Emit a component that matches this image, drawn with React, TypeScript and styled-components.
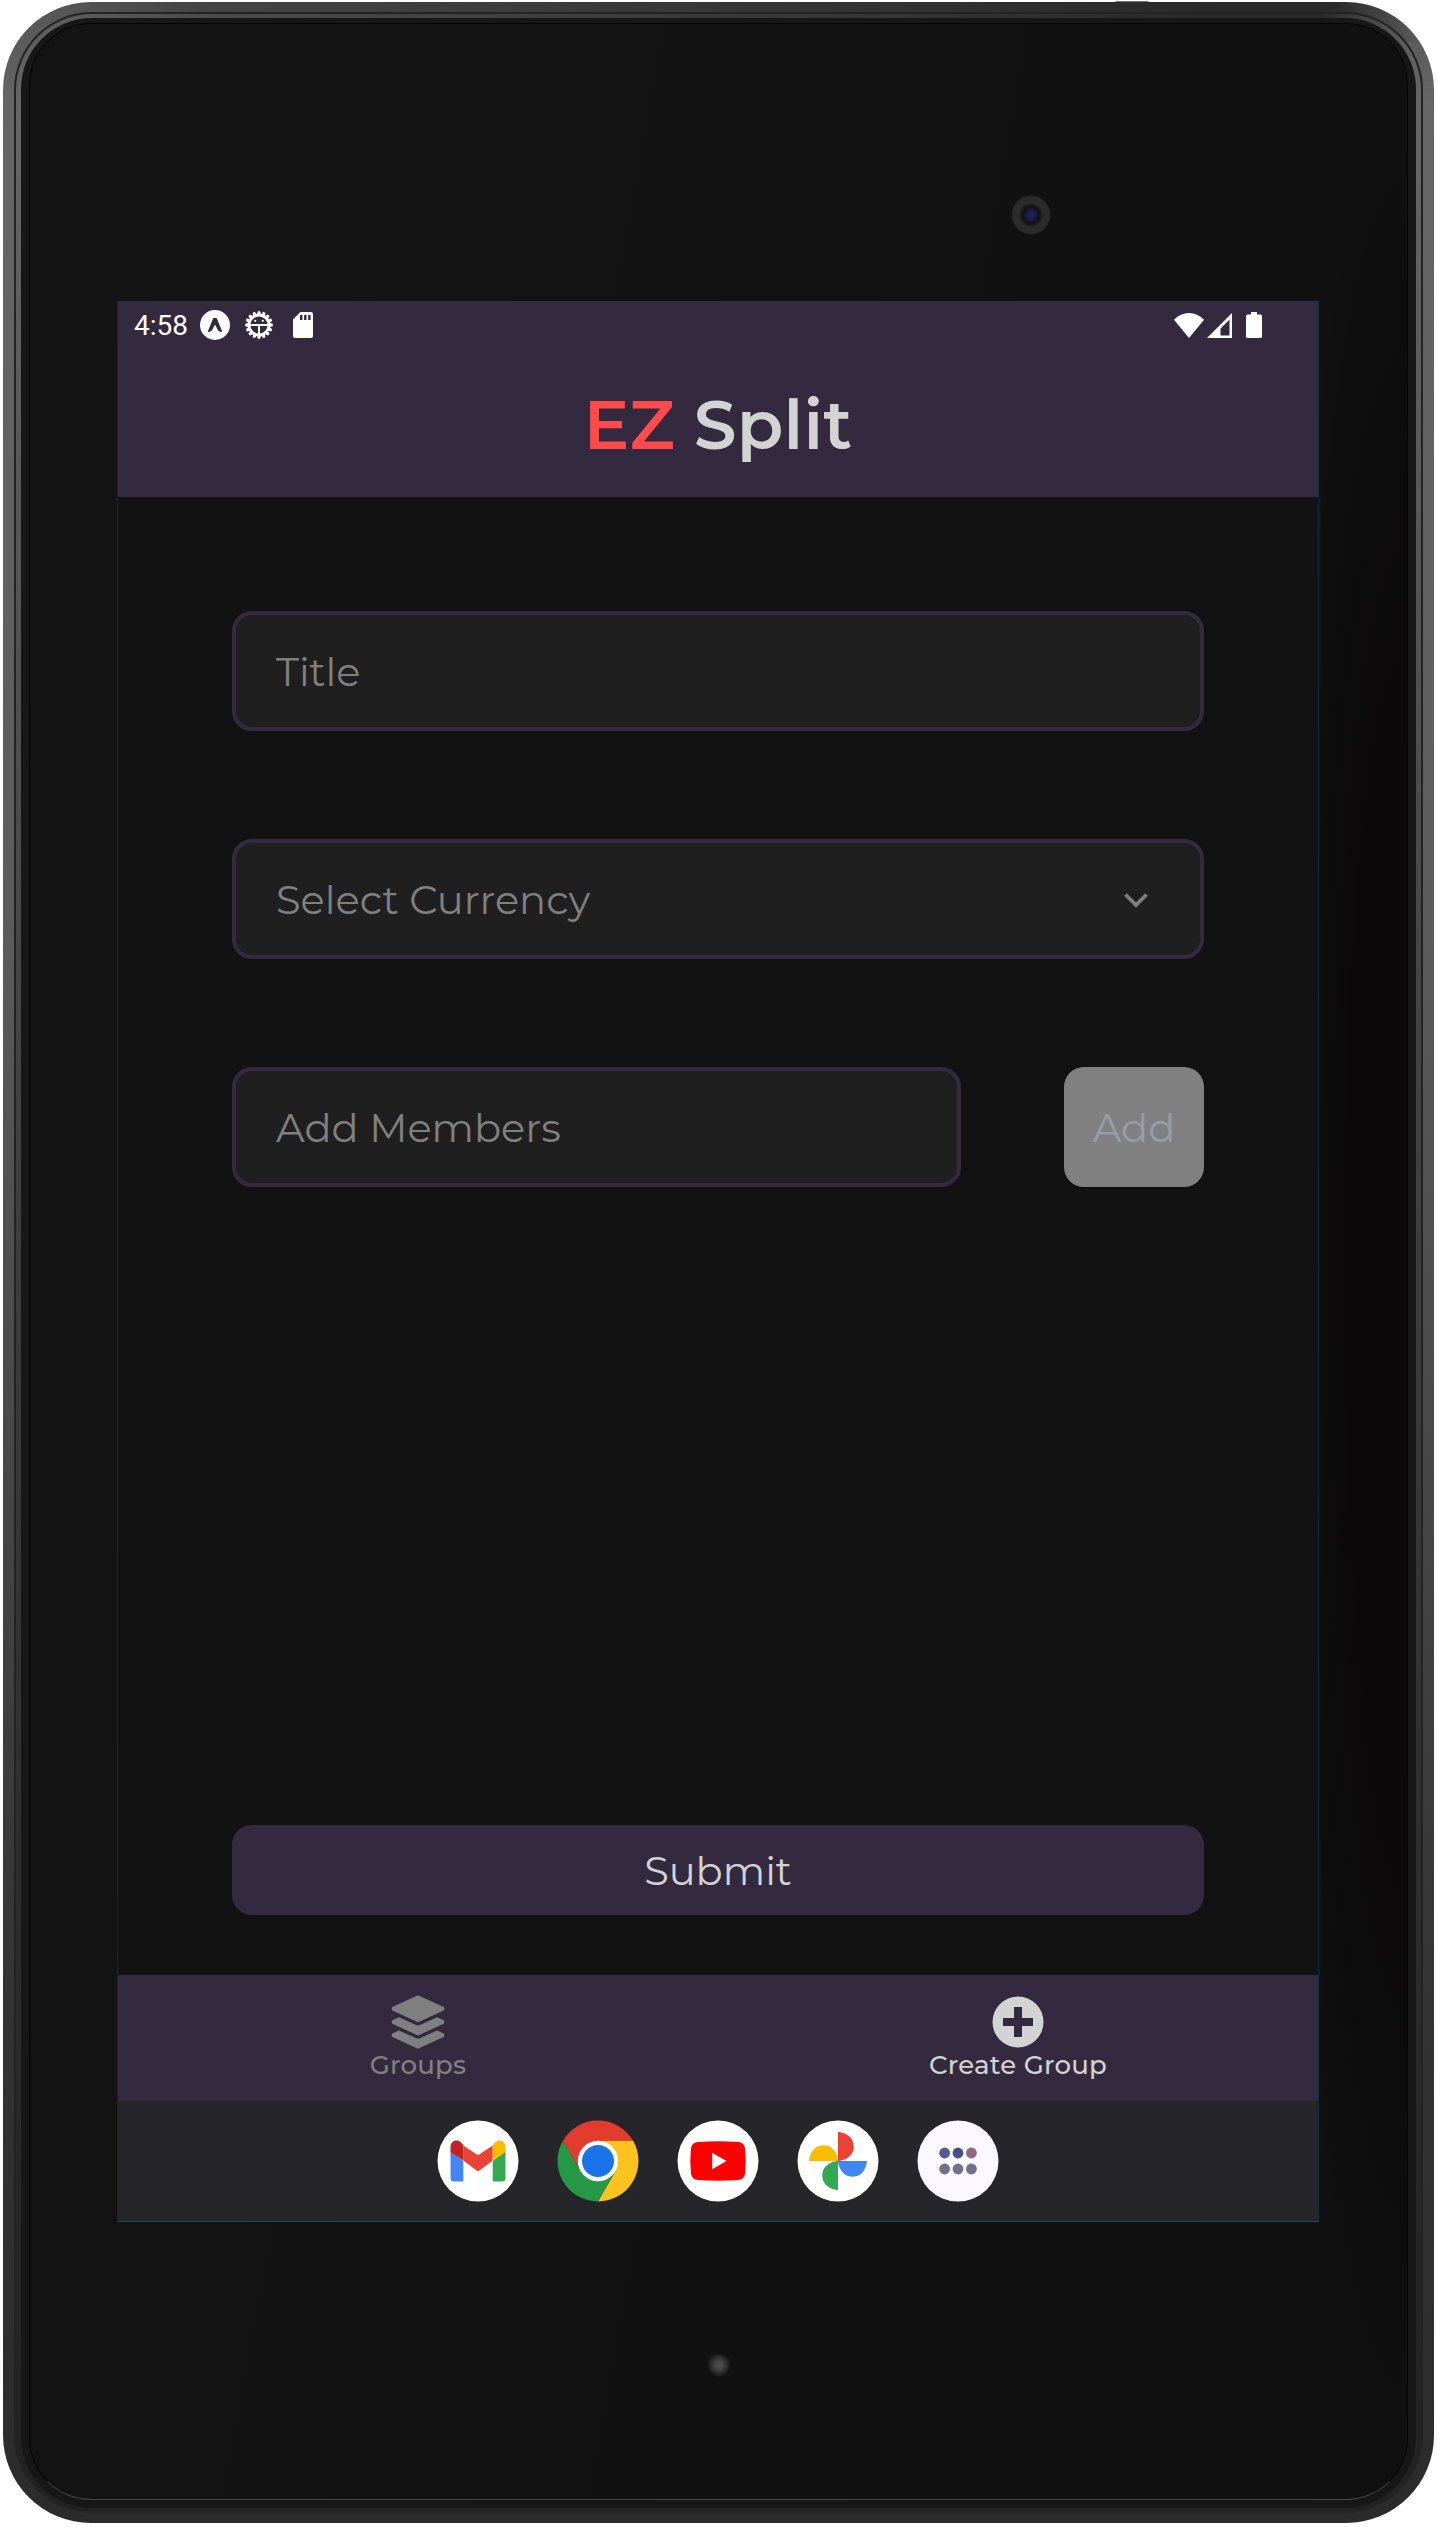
import React from "react";
import styled, { createGlobalStyle } from "styled-components";

const Global = createGlobalStyle`
  * { box-sizing: border-box; }
  body { margin: 0; background: #fff; }
`;

const sans = `Montserrat, Inter, "Open Sans", sans-serif`;

const Page = styled.div`
  position: relative;
  width: 1437px;
  height: 2527px;
  padding: 2px 3px 4px;
  background: #fff;
  overflow: hidden;
`;

const SideKey = styled.div`
  position: absolute;
  left: 1114px;
  top: 1px;
  width: 36px;
  height: 3px;
  border-radius: 3px 3px 0 0;
  background: #777;
`;

const Shell = styled.div`
  position: relative;
  height: 100%;
  padding: 10px 11px 10px;
  border-radius: 88px;
  background:
    linear-gradient(90deg, #44444400 60px, #444 200px, #2a2a2a 85%, #2a2a2a 93%, #2a2a2a00 99%) 0 0 / 100% 40px no-repeat,
    linear-gradient(180deg, #555 0, #666 100px, #5c5c5c 900px, #333 2000px, #2b2b2b 100%);
`;

const Groove = styled.div`
  height: 100%;
  padding: 2px;
  border-radius: 78px;
  background: #232323;
`;

const Rim = styled.div`
  height: 100%;
  padding: 4px 5px 3px;
  border-radius: 76px;
  background:
    linear-gradient(90deg, #55555500 60px, #4a4a4a 200px, #2a2a2a 85%, #2a2a2a 93%, #2a2a2a00 99%) 0 0 / 100% 30px no-repeat,
    linear-gradient(180deg, #5c5c5c 0, #666 100px, #444 1000px, #2a2a2a 2000px, #222 100%);
`;

const Gasket = styled.div`
  height: 100%;
  padding: 5px 8px 8px;
  border-radius: 71px;
  background: #171717;
`;

const Face = styled.div`
  position: relative;
  height: 100%;
  padding: 276px 86px 0 87px;
  border: 1px solid #050505;
  border-bottom-color: #444;
  border-radius: 62px;
  background:
    radial-gradient(ellipse 130px 1200px at 100% 50%, #0a0809 40%, #0a080900 100%),
    linear-gradient(100deg, #141414 0%, #111 60%, #101010 100%);
`;

const Camera = styled.div`
  position: absolute;
  left: 981px;
  top: 171px;
  width: 40px;
  height: 40px;
  border-radius: 50%;
  background: radial-gradient(circle at 50% 50%, #202060 0 2px, #181830 6px, #111 8px, #1a1a1a 10px, #2a2a2a 12px, #2c2c2c 18px, #141414 20px);
`;

const Led = styled.div`
  position: absolute;
  left: 677px;
  top: 2329px;
  width: 24px;
  height: 24px;
  border-radius: 50%;
  background: radial-gradient(circle, #4a4a4a 0 3px, #333 7px, #121212 12px);
`;

const Screen = styled.main`
  display: flex;
  flex-direction: column;
  width: 1202px;
  height: 1922px;
  border: 1px solid #00303f;
  border-top-color: #02191f;
  border-bottom-color: #005468;
  background: #121212;
  font-family: ${sans};
`;

const Header = styled.header`
  height: 196px;
  background: #342a40;
`;

const StatusBar = styled.div`
  display: flex;
  justify-content: space-between;
  height: 48px;
  padding: 0 56px 0 16px;
`;

const StatusGroup = styled.div`
  display: flex;
  align-items: center;
`;

const StatusIcon = styled.svg<{ $gap?: number }>`
  display: block;
  margin-left: ${p => p.$gap ?? 0}px;
`;

const Time = styled.span`
  width: 66px;
  padding-top: 2px;
  color: #fff;
  font: 400 28px/48px Roboto, sans-serif;
`;

const Brand = styled.h1`
  margin: 27px 0 0;
  color: #d3d3d3;
  font-size: 68px;
  font-weight: 600;
  line-height: 98px;
  letter-spacing: 0.2px;
  text-align: center;
`;

const Accent = styled.span`
  color: #ff4b4b;
`;

const Form = styled.form`
  display: flex;
  flex-direction: column;
  flex: 1;
  gap: 108px;
  padding: 114px 114px 60px;
`;

const Field = styled.div<{ $width?: number }>`
  display: flex;
  align-items: center;
  justify-content: space-between;
  width: ${p => (p.$width ? p.$width + "px" : "100%")};
  height: 120px;
  padding: 0 51px 0 40px;
  border: 4px solid #342a40;
  border-radius: 20px;
  background: #1f1f1f;
  color: #808080;
  font-size: 40px;
  font-weight: 400;
`;

const Chevron = styled.svg`
  display: block;
  margin-top: 2px;
`;

const MemberRow = styled.div`
  display: flex;
  justify-content: space-between;
`;

const Button = styled.div<{ $muted?: boolean }>`
  display: flex;
  align-items: center;
  justify-content: center;
  width: ${p => (p.$muted ? "140px" : "100%")};
  height: ${p => (p.$muted ? 120 : 90)}px;
  margin-top: ${p => (p.$muted ? "0" : "auto")};
  border-radius: 20px;
  background: ${p => (p.$muted ? "#808080" : "#342a40")};
  color: ${p => (p.$muted ? "#939ea8" : "#d3d3d3")};
  font-size: 40px;
  font-weight: 400;
`;

const Tabs = styled.nav`
  display: grid;
  grid-template-columns: 1fr 1fr;
  height: 126px;
  background: #342a40;
`;

const Tab = styled.div<{ $active?: boolean }>`
  display: flex;
  flex-direction: column;
  align-items: center;
  padding-top: 20px;
  color: ${p => (p.$active ? "#d3d3d3" : "#808080")};
  font-size: 26px;
  font-weight: 500;
  line-height: 33px;
  letter-spacing: 0.2px;
`;

const Dock = styled.div`
  display: flex;
  justify-content: center;
  align-items: center;
  gap: 38px;
  height: 120px;
  background: #26252a;
`;

const AppIcon = styled.svg`
  display: block;
  width: 82px;
  height: 82px;
`;

const teeth = Array.from({ length: 16 }, (_, i) => i * 22.5);

export default function App() {
  return (
    <>
      <Global />
      <Page>
        <SideKey />
        <Shell><Groove><Rim><Gasket><Face>
          <Camera />
          <Led />
          <Screen>
            <Header>
              <StatusBar>
                <StatusGroup>
                  <Time>4:58</Time>
                  <StatusIcon width="30" height="30" viewBox="0 0 30 30">
                    <circle cx="15" cy="15" r="15" fill="#fff" />
                    <path d="M8.3 21.5 13.6 8.4H16.4L21.7 21.5 18.8 20.8 15 13.6 11.2 20.8Z" fill="#342a40" stroke="#342a40" strokeWidth="1" strokeLinejoin="round" />
                  </StatusIcon>
                  <StatusIcon width="28" height="28" viewBox="-14 -14 28 28" $gap={15}>
                    {teeth.map(a => <path key={a} d="M-2.2-10 -1.2-13.8H1.2L2.2-10Z" fill="#fff" transform={`rotate(${a})`} />)}
                    <circle r="9.9" fill="none" stroke="#fff" strokeWidth="2.6" />
                    <path d="M-9 0H9M0 0V10" stroke="#fff" strokeWidth="2" />
                    <circle cx="-3.8" cy="-4.2" r="1.1" fill="#fff" />
                    <circle cx="3.8" cy="-4.2" r="1.1" fill="#fff" />
                  </StatusIcon>
                  <StatusIcon width="20" height="26" viewBox="0 0 20 26" $gap={20}>
                    <path d="M7.5 0H18Q20 0 20 2V24Q20 26 18 26H2Q0 26 0 24V7.2Z" fill="#fff" />
                    <path d="M8.2 3V8M12.3 3V8M16.4 3V8" stroke="#342a40" strokeWidth="2.4" />
                  </StatusIcon>
                </StatusGroup>
                <StatusGroup>
                  <StatusIcon width="30" height="25" viewBox="0 0 30 25">
                    <path d="M0 6.8Q6.5 0 15 0T30 6.8L15 25Z" fill="#fff" />
                  </StatusIcon>
                  <StatusIcon width="25" height="25" viewBox="0 0 25 25" $gap={3}>
                    <path fillRule="evenodd" d="M25 0V25H0ZM22.5 6.5 13.5 15.5V22.5H22.5Z" fill="#fff" />
                  </StatusIcon>
                  <StatusIcon width="16" height="26" viewBox="0 0 16 26" $gap={14}>
                    <path d="M5 0H11V2.5H14.5Q16 2.5 16 4V24.5Q16 26 14.5 26H1.5Q0 26 0 24.5V4Q0 2.5 1.5 2.5H5Z" fill="#fff" />
                  </StatusIcon>
                </StatusGroup>
              </StatusBar>
              <Brand><Accent>EZ</Accent> Split</Brand>
            </Header>
            <Form>
              <Field>Title</Field>
              <Field>
                Select Currency
                <Chevron width="26" height="17" viewBox="0 0 26 17">
                  <path d="M2.5 2.5 13 13 23.5 2.5" fill="none" stroke="#808080" strokeWidth="3.8" />
                </Chevron>
              </Field>
              <MemberRow>
                <Field $width={729}>Add Members</Field>
                <Button $muted>Add</Button>
              </MemberRow>
              <Button>Submit</Button>
            </Form>
            <Tabs>
              <Tab>
                <svg width="54" height="54" viewBox="-6 -6 524 524">
                  <path fill="#808080" d="M12.41 148.02l232.94 105.67c6.8 3.09 14.49 3.09 21.29 0l232.94-105.67c16.55-7.51 16.55-32.52 0-40.03L266.65 2.31a25.607 25.607 0 0 0-21.29 0L12.41 107.98c-16.55 7.51-16.55 32.53 0 40.04zm487.18 88.28l-58.09-26.33-161.64 73.27c-7.56 3.43-15.59 5.17-23.86 5.17s-16.29-1.74-23.86-5.17L70.51 209.97l-58.1 26.33c-16.55 7.5-16.55 32.5 0 40l232.94 105.59c6.8 3.08 14.49 3.08 21.29 0L499.59 276.3c16.55-7.5 16.55-32.5 0-40zm0 127.8l-57.87-26.23-161.86 73.37c-7.56 3.43-15.59 5.17-23.86 5.17s-16.29-1.74-23.86-5.17L70.29 337.87 12.41 364.1c-16.55 7.5-16.55 32.5 0 40l232.94 105.59c6.8 3.08 14.49 3.08 21.29 0L499.59 404.1c16.55-7.5 16.55-32.5 0-40z" />
                </svg>
                Groups
              </Tab>
              <Tab $active>
                <svg width="54" height="54" viewBox="-27 -27 54 54">
                  <circle r="25.5" fill="#d3d3d3" />
                  <path d="M0-15V15M-15 0H15" stroke="#342a40" strokeWidth="8" />
                </svg>
                Create Group
              </Tab>
            </Tabs>
            <Dock>
              <AppIcon viewBox="-41 -41 82 82">
                <circle r="40.5" fill="#fff" />
                <path d="M-27.5-10V17Q-27.5 20.5-24 20.5H-14.7V0Z" fill="#4285f4" />
                <path d="M27.5-10V17Q27.5 20.5 24 20.5H14.7V0Z" fill="#34a853" />
                <path d="M-14.7-15.5 0-5.8 14.7-15.5V-.5L0 10.5-14.7-.5Z" fill="#ea4335" />
                <path d="M-27.5-9V-14C-27.5-20-21-22.5-17-18.5L-14.7-16V-.5Z" fill="#c5221f" />
                <path d="M27.5-9V-14C27.5-20 21-22.5 17-18.5L14.7-16V-.5Z" fill="#fbbc04" />
              </AppIcon>
              <AppIcon viewBox="-41 -41 82 82">
                <path d="M-17.5 10.1-35.1-20.2A40.5 40.5 0 0 1 35.1-20.2H0V0Z" fill="#e33b2e" />
                <path d="M0-20.2H35.1A40.5 40.5 0 0 1 0 40.5L17.5 10.1Z" fill="#fcc31e" />
                <path d="M-35.1-20.2A40.5 40.5 0 0 0 0 40.5L17.5 10.1H-17.5Z" fill="#279847" />
                <circle r="20.2" fill="#fff" />
                <circle r="16" fill="#1a73e8" />
              </AppIcon>
              <AppIcon viewBox="-41 -41 82 82">
                <circle r="40.5" fill="#fff" />
                <path d="M-20-19Q0-20.5 20-19Q26-18.5 27-13Q28.5 0 27 13Q26 18.5 20 19Q0 20.5-20 19Q-26 18.5-27 13Q-28.5 0-27-13Q-26-18.5-20-19Z" fill="#f00" />
                <path d="M-5.8-8.2V8.2L8.5 0Z" fill="#fff" />
              </AppIcon>
              <AppIcon viewBox="-41 -41 82 82">
                <circle r="40.5" fill="#fff" />
                <path d="M0 0V-29C2-29 15.7-27 15.7-14.5S2 0 0 0Z" fill="#ea4335" />
                <path d="M0 0H29C29 2 27 15.7 14.5 15.7S0 2 0 0Z" fill="#4285f4" />
                <path d="M0 0V29C-2 29-15.7 27-15.7 14.5S-2 0 0 0Z" fill="#34a853" />
                <path d="M0 0H-29C-29-2-27-15.7-14.5-15.7S0-2 0 0Z" fill="#fbbc04" />
              </AppIcon>
              <AppIcon viewBox="-41 -41 82 82">
                <circle r="40.5" fill="#fcf8ff" />
                <circle cx="-13.4" cy="-8" r="5.4" fill="#535a94" />
                <circle cy="-8" r="5.4" fill="#464f87" />
                <circle cx="13.4" cy="-8" r="5.4" fill="#8e6a82" />
                <circle cx="-13.4" cy="8" r="5.4" fill="#717289" />
                <circle cy="8" r="5.4" fill="#717289" />
                <circle cx="13.4" cy="8" r="5.4" fill="#717289" />
              </AppIcon>
            </Dock>
          </Screen>
        </Face></Gasket></Rim></Groove></Shell>
      </Page>
    </>
  );
}
